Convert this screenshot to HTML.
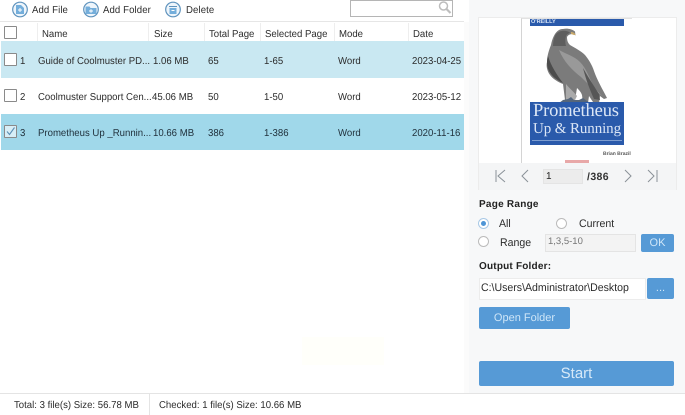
<!DOCTYPE html>
<html>
<head>
<meta charset="utf-8">
<style>
*{box-sizing:border-box}
html,body{margin:0;padding:0;background:#fff}
body{width:685px;height:415px;position:relative;overflow:hidden;font-family:"Liberation Sans",sans-serif;color:#2b2b2b;font-size:10px;text-rendering:geometricPrecision}
.a{position:absolute;white-space:nowrap}
.t{line-height:14px;height:14px;transform:scaleX(.96);transform-origin:0 50%}
.s{transform:scaleX(.96);transform-origin:0 50%}
.n{transform:none}
.cb{position:absolute;width:13px;height:13px;border:1px solid #8a8a8a;background:#fff;border-radius:1px}
.btn{position:absolute;background:#569ad6;border-radius:2px;color:#cfe6f8;text-align:center}
.rad{position:absolute;width:11px;height:11px;border:1px solid #bbb;border-radius:50%;background:#fff}
.hs{position:absolute;top:23px;width:1px;height:18px;background:#eeeeee}
</style>
</head>
<body>
<!-- right panel bg -->
<div class="a" style="left:469px;top:0;width:216px;height:393px;background:#f7f8f9"></div>

<!-- toolbar icons -->
<svg class="a" style="left:0;top:0" width="200" height="20">
<g><circle cx="20" cy="9.500" r="7.300" fill="#eef5fb" stroke="#5f93bd" stroke-width="1.200"/><path d="M16 5h5l3 3v6h-8z" fill="#74aedb"/><path d="M18 10h4M20 8v4" stroke="#fff" stroke-width="1"/></g>
<g><circle cx="91" cy="9.500" r="7.300" fill="#eef5fb" stroke="#5f93bd" stroke-width="1.200"/><path d="M85.500 6.500h4l1 1.500h6v6h-11z" fill="#74aedb"/><path d="M89 11h4M91 9.300v3.400" stroke="#fff" stroke-width="1"/></g>
<g><circle cx="173" cy="9.500" r="7.300" fill="#eef5fb" stroke="#5f93bd" stroke-width="1.200"/><path d="M169 6h8v1h-8z" fill="#5f93bd"/><path d="M169.500 8h7v6h-7z" fill="#74aedb"/><path d="M171.500 10.500h3" stroke="#fff" stroke-width="1"/></g>
</svg>
<div class="a t" style="left:32px;top:4px;letter-spacing:.1px">Add File</div>
<div class="a t" style="left:103px;top:4px;letter-spacing:.1px">Add Folder</div>
<div class="a t" style="left:186px;top:4px;letter-spacing:.1px">Delete</div>

<!-- search -->
<div class="a" style="left:350px;top:0;width:103px;height:17px;border:1px solid #b5b5b5;background:#fff"></div>
<svg class="a" style="left:437px;top:0" width="16" height="16"><circle cx="6.500" cy="6" r="4" fill="none" stroke="#bdbdbd" stroke-width="1.500"/><path d="M9.500 9l4 4" stroke="#bdbdbd" stroke-width="2.200"/></svg>

<!-- header -->
<div class="a" style="left:0;top:21px;width:464px;height:1px;background:#e6e6e6"></div>
<div class="hs" style="left:37px"></div><div class="hs" style="left:148px"></div><div class="hs" style="left:204px"></div><div class="hs" style="left:260px"></div><div class="hs" style="left:334px"></div><div class="hs" style="left:408px"></div>
<div class="cb" style="left:4px;top:26px"></div>
<div class="a t" style="left:42px;top:28px">Name</div>
<div class="a t" style="left:154px;top:28px">Size</div>
<div class="a t" style="left:209px;top:28px">Total Page</div>
<div class="a t" style="left:265px;top:28px">Selected Page</div>
<div class="a t" style="left:339px;top:28px">Mode</div>
<div class="a t" style="left:413px;top:28px">Date</div>
<div class="a" style="left:464px;top:22px;width:5px;height:371px;background:#fbfbfb"></div>

<!-- rows -->
<div class="a" style="left:1px;top:41px;width:463px;height:37px;background:#c9e8f2"></div>
<div class="a" style="left:1px;top:114px;width:463px;height:36px;background:#a0d8ea"></div>

<div class="cb" style="left:4px;top:53px"></div>
<div class="a t" style="left:20px;top:55px">1</div>
<div class="a t" style="left:38px;top:55px">Guide of Coolmuster PD...</div>
<div class="a t" style="left:153px;top:55px">1.06 MB</div>
<div class="a t" style="left:208px;top:55px">65</div>
<div class="a t" style="left:264px;top:55px">1-65</div>
<div class="a t" style="left:338px;top:55px">Word</div>
<div class="a t" style="left:412px;top:55px">2023-04-25</div>

<div class="cb" style="left:4px;top:89px"></div>
<div class="a t" style="left:20px;top:91px">2</div>
<div class="a t" style="left:38px;top:91px">Coolmuster Support Cen...</div>
<div class="a t" style="left:152px;top:91px">45.06 MB</div>
<div class="a t" style="left:208px;top:91px">50</div>
<div class="a t" style="left:264px;top:91px">1-50</div>
<div class="a t" style="left:338px;top:91px">Word</div>
<div class="a t" style="left:412px;top:91px">2023-05-12</div>

<div class="cb" style="left:4px;top:125px;background:#d8eef6"></div>
<svg class="a" style="left:4px;top:125px" width="13" height="13"><path d="M3 6.500l2.500 3L10.500 2.500" fill="none" stroke="#5b8fb5" stroke-width="1.100"/></svg>
<div class="a t" style="left:20px;top:127px;color:#1f2f3a">3</div>
<div class="a t" style="left:38px;top:127px;color:#1f2f3a">Prometheus Up _Runnin...</div>
<div class="a t" style="left:153px;top:127px;color:#1f2f3a">10.66 MB</div>
<div class="a t" style="left:208px;top:127px;color:#1f2f3a">386</div>
<div class="a t" style="left:264px;top:127px;color:#1f2f3a">1-386</div>
<div class="a t" style="left:338px;top:127px;color:#1f2f3a">Word</div>
<div class="a t" style="left:412px;top:127px;color:#1f2f3a">2020-11-16</div>

<div class="a" style="left:302px;top:337px;width:82px;height:28px;background:#fffffa"></div>

<!-- preview -->
<div class="a" style="left:478px;top:17px;width:199px;height:173px;background:#fff;border:1px solid #ececec"></div>
<div class="a" style="left:521px;top:18px;width:111px;height:145px;background:#fff;border-left:1px solid #d4d4d4;border-top:1px solid #e2e2e2"></div>
<div class="a" style="left:530px;top:19px;width:94px;height:7px;background:#2a5aab;color:#d8e4f5;font-size:5.500px;line-height:7px;padding-left:1px;font-weight:bold">O'REILLY</div>
<svg class="a" style="left:540px;top:25px" width="75" height="80" viewBox="540 25 75 80">
<path d="M563 29C567 28 572 29 575 31.500L575.500 35.500L573 34C570 34 568 35 567 37C567 41 568 43 570 45C575 48 581 51 585 55C589 60 592 65 594 71C597 80 603 90 607 98L604 99L600 96L599 103L593 102L589 96L588 103L583 103L582 95C581 92 579 90 577 88L575 100L565 100L563 84C558 82 553 79 550 75C547 71 546 66 547 62C547 56 549 50 551 45C552 39 555 32 559 30C561 29 562 29 563 29Z" fill="#7b7b7b"/>
<path d="M556 34C560 30 566 30 570 32.500L567 34.500C565 37 565 42 566 46C562 46 556 46 553 46C553 42 554 37 556 34Z" fill="#5e5e5e"/>
<path d="M559 50C566 54 574 56 580 62C586 68 589 77 593 85C596 90 600 94 604 97C596 92 588 84 581 77C572 70 564 62 559 50Z" fill="#999"/>
<path d="M548 56C546 63 547 69 551 74C554 78 559 81 563 83C557 75 551 66 548 56Z" fill="#4c4c4c"/>
<path d="M583 68C588 77 594 86 599 94L600 100L594 99C590 90 586 80 583 68Z" fill="#565656"/>
<path d="M566 84C569 88 574 92 577 96L575 100L566 100Z" fill="#aaa"/>
<path d="M571 32C573 32 575 33 575.500 35L574 35L571 34Z" fill="#c9a96a"/>
<path d="M559 103L563 100L568 99L571 97L574 100L579 100L583 98L587 101L590 103Z" fill="#56667a"/>
</svg>
<div class="a" style="left:530px;top:102px;width:94px;height:43px;background:#2a5aab"></div>
<div class="a" style="left:533px;top:101px;font-family:'Liberation Serif',serif;font-size:18.500px;line-height:21px;color:#dbe6f6;letter-spacing:-.15px">Prometheus</div>
<div class="a" style="left:533px;top:120px;font-family:'Liberation Serif',serif;font-size:15px;line-height:18px;color:#dbe6f6;letter-spacing:-.1px">Up &amp; Running</div>
<div class="a" style="left:532px;top:140px;width:90px;height:1px;background:#7d9dd0"></div>
<div class="a" style="left:603px;top:151px;font-size:5px;line-height:7px;color:#555;font-weight:bold">Brian Brazil</div>
<div class="a" style="left:565px;top:160px;width:24px;height:3px;background:#e8a8a8"></div>

<!-- nav -->
<div class="a" style="left:479px;top:163px;width:197px;height:27px;background:#f4f5f6"></div>
<svg class="a" style="left:490px;top:168px" width="180" height="16">
<g fill="none" stroke="#8a9198" stroke-width="1">
<path d="M6 2v12M15 2L8 8l7 6"/>
<path d="M38 2l-6 6 6 6"/>
<path d="M135 2l6 6-6 6"/>
<path d="M158 2l6 6-6 6M167 2v12"/>
</g>
</svg>
<div class="a" style="left:543px;top:169px;width:40px;height:15px;background:#ececec;border:1px solid #e4e4e4"></div>
<div class="a t n" style="left:546px;top:170px;color:#222">1</div>
<div class="a t n" style="left:587px;top:170px;font-weight:bold;color:#333;letter-spacing:.4px;font-size:10.500px">/386</div>

<!-- page range -->
<div class="a t n" style="left:479px;top:198px;font-weight:bold;letter-spacing:.25px;font-size:10px;color:#222">Page Range</div>
<div class="rad" style="left:478px;top:218px;border-color:#a9c9e6"></div>
<div class="a" style="left:481px;top:221px;width:5px;height:5px;border-radius:50%;background:#4e95d6"></div>
<div class="a s" style="left:499px;top:217px;font-size:11px;line-height:14px">All</div>
<div class="rad" style="left:556px;top:218px"></div>
<div class="a s" style="left:579px;top:217px;font-size:11px;line-height:14px">Current</div>
<div class="rad" style="left:478px;top:236px"></div>
<div class="a s" style="left:500px;top:236px;font-size:11px;line-height:14px">Range</div>
<div class="a" style="left:545px;top:234px;width:91px;height:18px;background:#f3f3f3;border:1px solid #e4e4e4;color:#777;font-size:9.500px;line-height:14px;padding-left:2px">1,3,5-10</div>
<div class="btn" style="left:641px;top:234px;width:33px;height:18px;font-size:11px;line-height:18px">OK</div>

<!-- output -->
<div class="a t n" style="left:479px;top:260px;font-weight:bold;letter-spacing:.2px;color:#222">Output Folder:</div>
<div class="a" style="left:479px;top:278px;width:167px;height:22px;background:#fff;border:1px solid #ececec"></div>
<div class="a s" style="left:481px;top:278px;font-size:11px;line-height:21px;color:#2b2b2b">C:\Users\Administrator\Desktop</div>
<div class="btn" style="left:647px;top:278px;width:27px;height:21px;font-size:11px;line-height:21px">...</div>
<div class="btn" style="left:479px;top:307px;width:91px;height:22px;font-size:11px;line-height:22px">Open Folder</div>
<div class="btn" style="left:479px;top:361px;width:195px;height:25px;font-size:15px;line-height:25px;color:#d6e9f8">Start</div>

<!-- status -->
<div class="a" style="left:0;top:393px;width:685px;height:1px;background:#e4e4e4"></div>
<div class="a" style="left:149px;top:394px;width:1px;height:21px;background:#e4e4e4"></div>
<div class="a t" style="left:14px;top:399px">Total: 3 file(s) Size: 56.78 MB</div>
<div class="a t" style="left:159px;top:399px">Checked: 1 file(s) Size: 10.66 MB</div>
</body>
</html>
